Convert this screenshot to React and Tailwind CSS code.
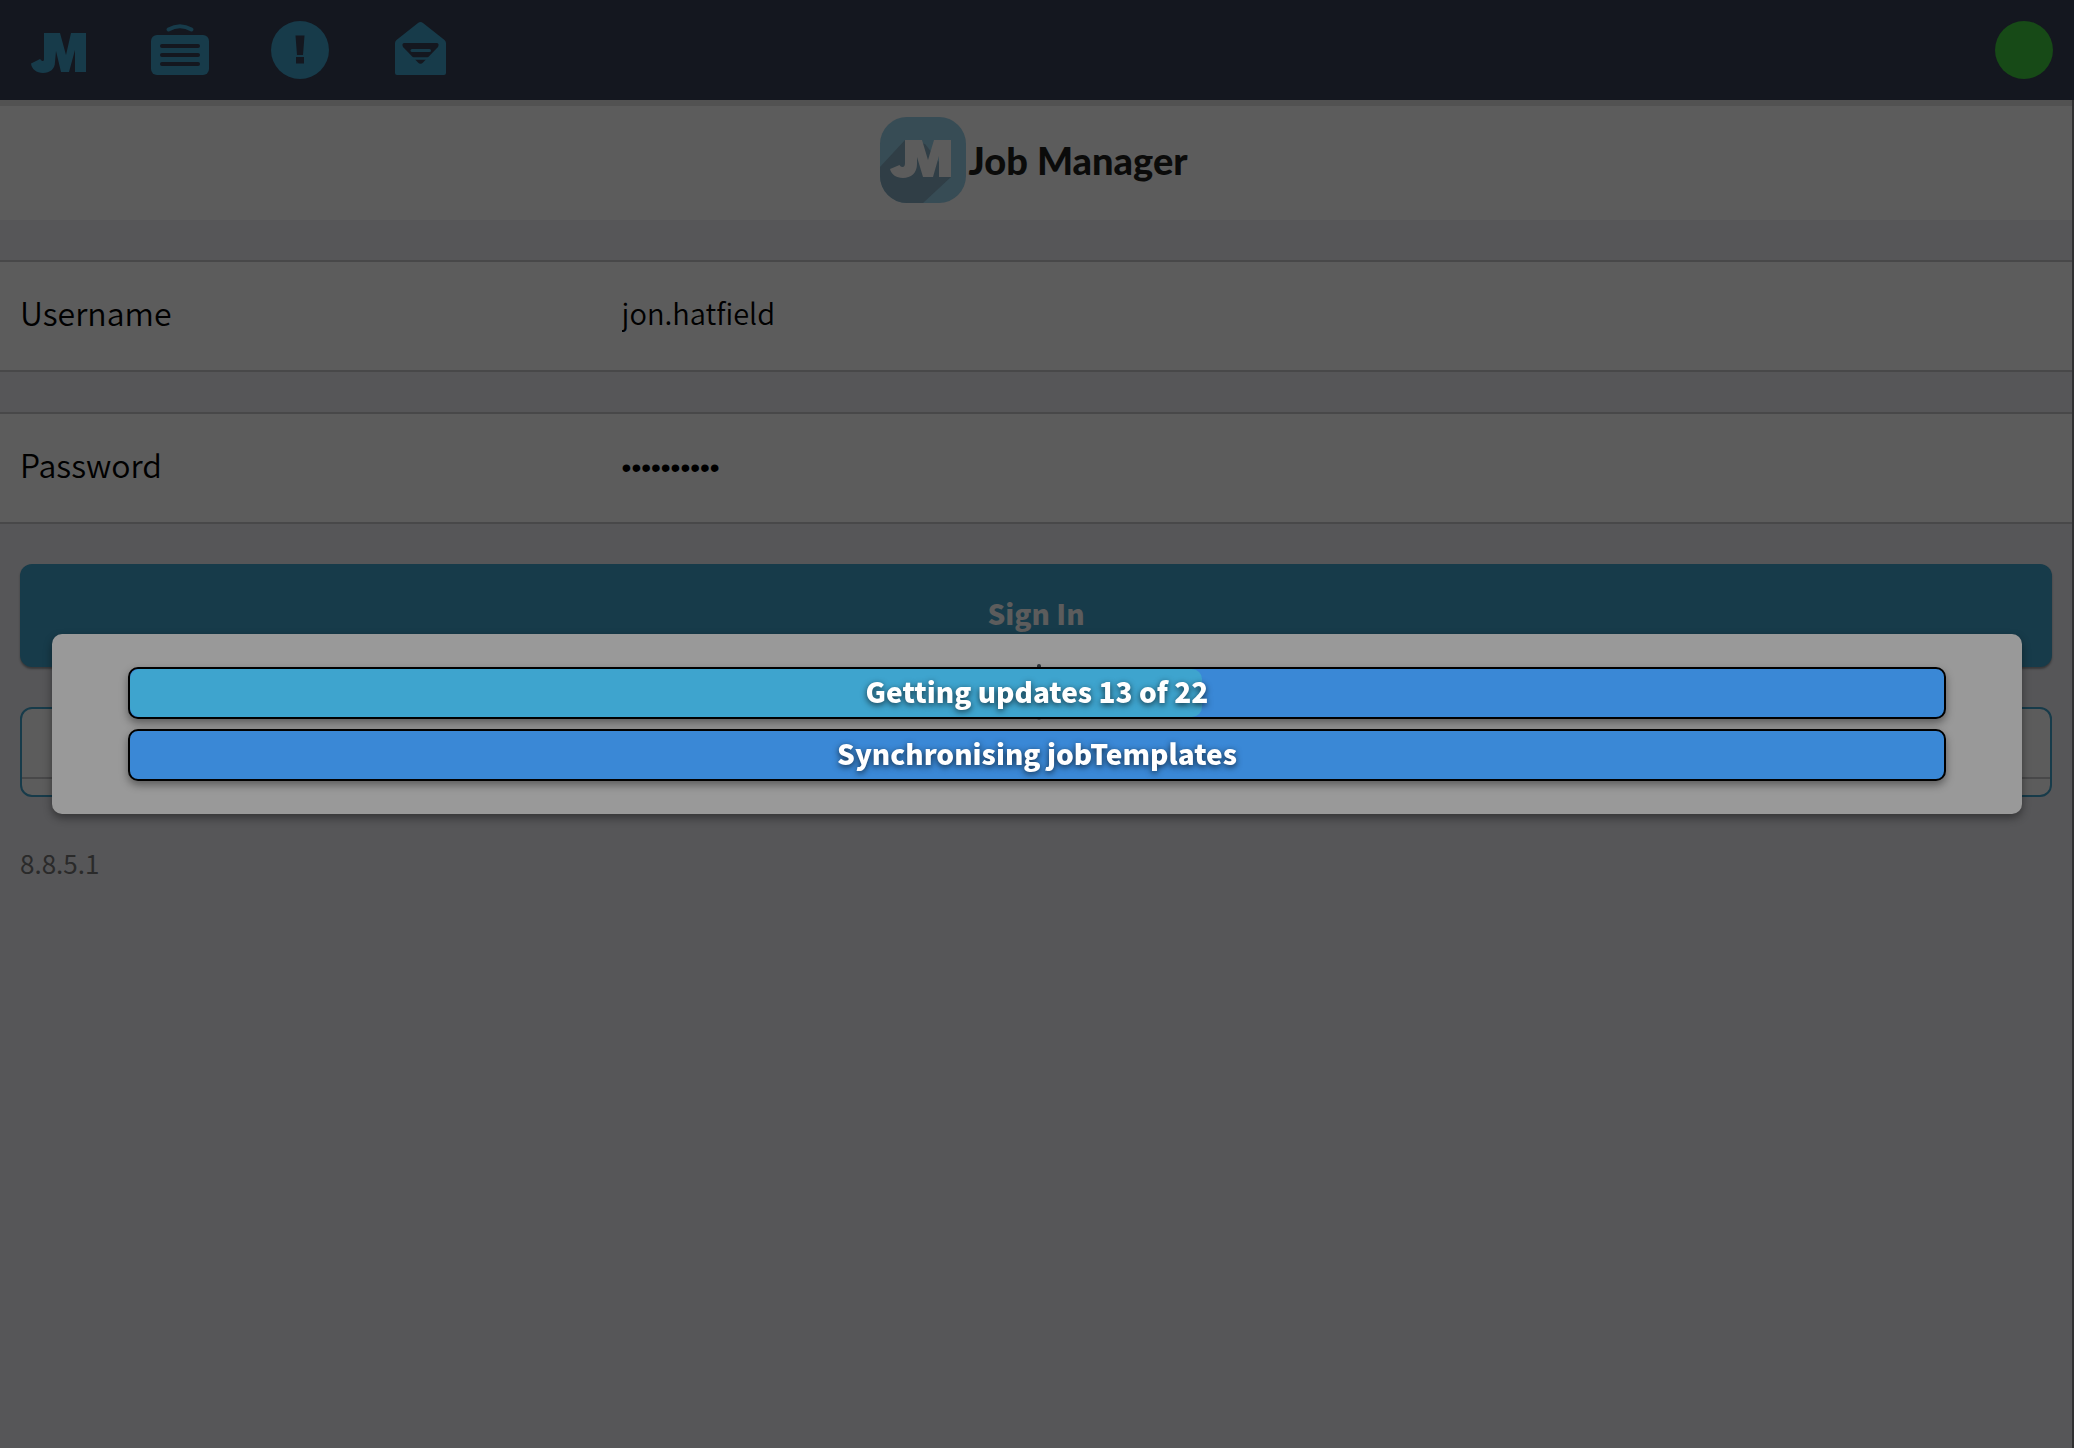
function Monogram({ className }) {
  return (
    <path
      className={className}
      d="M14 13H30L36 35L41 13H56V52H45V30L39 52H31L26 31L25 42C25 49 20 53 13 53C6.500 53 1.500 49 1 43.500L10 39L12 41C13.500 41.300 14 40.500 14 39Z"
    />
  );
}

function HomeIcon() {
  return (
    <svg viewBox="0 0 60 60" className="size-15" aria-hidden="true">
      <Monogram className="fill-[#173b4a]" />
    </svg>
  );
}

function JobsIcon() {
  return (
    <svg viewBox="0 0 60 60" className="size-15" aria-hidden="true">
      <rect x="1" y="15" width="58" height="40" rx="6" className="fill-[#173b4a]" />
      <path d="M18.500 9.500Q30 3 41.500 9.500" fill="none" strokeWidth="4" strokeLinecap="round" className="stroke-[#173b4a]" />
      <path d="M12 26H48M12 35H48M12 44H48" strokeWidth="4" strokeLinecap="round" className="stroke-[#14171f]" />
    </svg>
  );
}

function AlertIcon() {
  return (
    <svg viewBox="0 0 60 60" className="size-15" aria-hidden="true">
      <circle cx="30" cy="30" r="29" className="fill-[#173b4a]" />
      <path d="M25.500 15.500H34.500L33 35H27ZM26 37H34V43.500H26Z" className="fill-[#14171f]" />
    </svg>
  );
}

function MailIcon() {
  return (
    <svg viewBox="0 0 60 60" className="size-15" aria-hidden="true">
      <path d="M28 3Q30.500 1 33 3L54.500 20Q56 21.500 56 23V53Q56 55 54 55H7Q5 55 5 53V23Q5 21.500 6.500 20Z" className="fill-[#173b4a]" />
      <path d="M14 23H47Q49.500 23.500 48 27L33 42.500Q30.500 45 28 42.500L13 27Q11.500 23.500 14 23Z" className="fill-[#14171f]" />
      <path d="M22 30.500H39.500" strokeWidth="3" strokeLinecap="round" className="stroke-[#173b4a]" />
      <path d="M21 38.500H41" strokeWidth="2.5" className="stroke-[#173b4a]" />
    </svg>
  );
}

function Logo() {
  return (
    <div className="flex items-center gap-0.5 pr-1">
      <svg viewBox="0 0 86 86" className="size-[86px]" aria-hidden="true">
        <defs>
          <clipPath id="tile">
            <rect width="86" height="86" rx="27" />
          </clipPath>
        </defs>
        <g clipPath="url(#tile)">
          <rect width="86" height="86" className="fill-[#374c55]" />
          <path d="M25 23L0 50V86H43L71 60L60 30Z" className="fill-[#303e46]" />
          <path d="M42 23H71V60L59 45Z" className="fill-[#374c55]" />
        </g>
        <path
          className="fill-[#5c5c5c]"
          d="M25 23H42L48 43L54 23H71V60H59V39L53 60H43L37 40V47C37 56 31 61 23 61C16 61 11 57 10 52L19.500 48Q20.500 50 22.500 50Q25 50 25 46Z"
        />
      </svg>
      <span className="font-[Lato,sans-serif] text-[38px] leading-12 font-black whitespace-nowrap text-[#0b0b0a]">Job Manager</span>
    </div>
  );
}

function Field({ id, label, ...input }) {
  return (
    <div className="mt-10 flex h-28 items-center border-y-2 border-[#484849] bg-[#5c5c5c] pb-2 font-[350] text-black">
      <label htmlFor={id} className="w-[30%] pl-5 text-[32px]">{label}</label>
      <input
        id={id}
        className="h-16 min-w-0 flex-1 bg-transparent text-[29px] outline-none [&[type=password]]:pt-2 [&[type=password]]:font-['Liberation_Sans',sans-serif] [&[type=password]]:text-[28px]"
        {...input}
      />
    </div>
  );
}

function Progress({ text, value }) {
  return (
    <div
      role="progressbar"
      aria-label={text}
      aria-valuenow={Math.round(value * 100)}
      className="relative flex h-13 items-center justify-center overflow-hidden rounded-[10px] border-2 border-black bg-[#3a88d6] pb-1 shadow-[0_4px_8px_rgba(0,0,0,0.4)]"
    >
      <div className="absolute inset-y-0 left-0 rounded-[10px] bg-[#3ea4ce]" style={{ width: `${value * 100}%` }} />
      <span className="relative text-[28px] leading-10 font-black text-white [text-shadow:0_2px_6px_rgba(0,0,0,0.7)]">{text}</span>
    </div>
  );
}

function Spinner() {
  return (
    <svg viewBox="0 0 56 56" className="absolute top-[30px] left-1/2 size-14" aria-hidden="true" transform="translate(-26 0)">
      <path d="M28 2V14" strokeWidth="4" strokeLinecap="round" className="stroke-[#2f3338]" />
      <path d="M28 42V54" strokeWidth="4" strokeLinecap="round" className="stroke-[#666666]" />
    </svg>
  );
}

export default function App() {
  return (
    <div className="min-h-screen bg-[#565658] font-['Noto_Sans_CJK_SC',sans-serif]">
      <header className="flex h-25 items-center justify-between bg-[#14171f] pr-5 pl-[30px]">
        <nav className="flex gap-15">
          <button type="button" aria-label="Home"><HomeIcon /></button>
          <button type="button" aria-label="Jobs"><JobsIcon /></button>
          <button type="button" aria-label="Alerts"><AlertIcon /></button>
          <button type="button" aria-label="Messages"><MailIcon /></button>
        </nav>
        <div role="img" aria-label="Online" className="mr-px size-[58px] rounded-full bg-[#174a17]" />
      </header>

      <main className="min-h-[calc(100vh-100px)] border-r-2 border-[#303031]">
        <div className="flex h-30 items-center justify-center border-t-6 border-[#525252] bg-[#5c5c5c] pb-1.5">
          <Logo />
        </div>
        <form onSubmit={(e) => e.preventDefault()}>
          <Field id="username" label="Username" type="text" defaultValue="jon.hatfield" />
          <Field id="password" label="Password" type="password" defaultValue="abcdefghij" />
          <div className="px-5 pt-10">
            <button type="submit" className="block h-[103px] w-full rounded-xl bg-[#173b4a] pb-1.5 text-[28px] font-black text-[#5c5c5c] shadow-[0_2px_2px_rgba(0,0,0,0.35)]">
              Sign In
            </button>
            <div className="mt-10 h-[90px] rounded-xl border-2 border-[#173b4a] bg-[#5c5c5c] pt-[68px]">
              <div className="border-t-2 border-[#484849]" />
            </div>
          </div>
        </form>
        <p className="px-5 pt-[46px] text-[26px] leading-10 text-[#2a2a2a]">8.8.5.1</p>
      </main>

      <div className="fixed inset-0 flex items-center justify-center">
        <div role="dialog" aria-label="Synchronising" className="relative w-[95%] rounded-[10px] bg-[#999999] px-19 py-8 shadow-[0_4px_8px_rgba(0,0,0,0.4)]">
          <Spinner />
          <div className="relative flex flex-col gap-2.5 py-px">
            <Progress text="Getting updates 13 of 22" value={13 / 22} />
            <Progress text="Synchronising jobTemplates" value={0} />
          </div>
        </div>
      </div>
    </div>
  );
}
